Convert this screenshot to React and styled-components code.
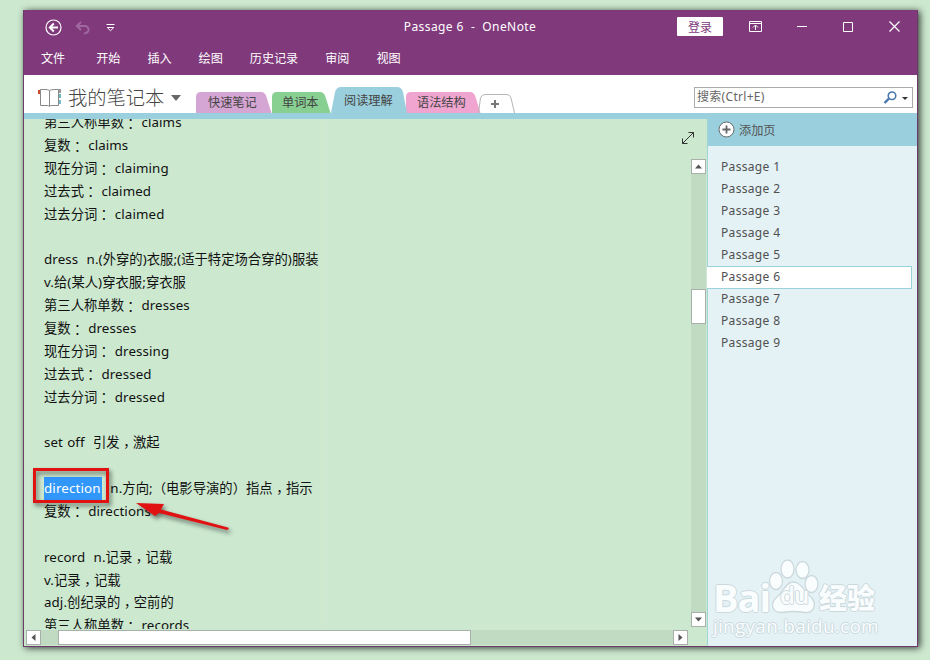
import React from 'react';
import styled, { createGlobalStyle, css } from 'styled-components';

const GlobalStyle = createGlobalStyle`
  * {
    box-sizing: border-box;
  }
  body {
    margin: 0;
    background: #cce8cf;
    font-family: "Noto Sans", "Noto Sans CJK SC", sans-serif;
    overflow: hidden;
  }
  svg {
    display: block;
    flex: none;
  }
`;

const Desktop = styled.div`
  width: 930px;
  height: 660px;
  padding: 10px 12px 13px 23px;
`;

const Window = styled.div`
  position: relative;
  display: flex;
  flex-direction: column;
  width: 895px;
  height: 637px;
  border: 1px solid #6b3a6b;
  border-top: 0;
  background: #fff;
  box-shadow: 2px 1px 7px rgba(0, 0, 0, 0.75);
`;

const TitleBar = styled.header`
  flex: none;
  height: 65px;
  background: #80397b;
  color: #fff;
`;

const TitleRow = styled.div`
  display: grid;
  grid-template-columns: 1fr auto 1fr;
  align-items: center;
  height: 33px;
`;

const QuickAccess = styled.div`
  display: flex;
  align-items: center;
  gap: 13px;
  padding: 2px 0 0 21px;

  svg:last-child {
    margin-left: 3px;
  }
`;

const Title = styled.div`
  margin-left: -1px;
  font-size: 12px;
  line-height: 16px;
  white-space: pre;
  letter-spacing: 0.42px;
`;

const WindowButtons = styled.div`
  display: flex;
  align-items: center;
  justify-content: flex-end;
  padding-right: 17px;
`;

const SignIn = styled.button`
  width: 46px;
  height: 19px;
  margin-right: 26px;
  padding: 0;
  border: 0;
  border-radius: 1px;
  background: #fff;
  color: #80397b;
  font: 12px/17px "Noto Sans CJK SC", sans-serif;
`;

const Menu = styled.nav`
  display: flex;
  gap: 27px;
  padding: 7px 0 0 17px;
  font-size: 12.1px;
  line-height: 18px;

  span:first-child {
    margin-right: 4px;
  }
`;

const NotebookBar = styled.div`
  display: flex;
  flex: none;
  height: 38px;
`;

const Notebook = styled.div`
  display: flex;
  align-items: center;
  width: 172px;
  padding: 7px 0 0 14px;
  color: #444;
  font-size: 19.3px;
  font-weight: 300;
  line-height: 28px;
`;

const NotebookName = styled.span`
  width: 96px;
  margin: 0 7px 0 6px;
  white-space: nowrap;
`;

const Tabs = styled.div`
  display: flex;
  align-items: flex-end;
  flex: 1;
`;

const Tab = styled.div`
  position: relative;
  width: ${p => p.$width}px;
  height: ${p => p.$height}px;
  margin-right: ${p => p.$gap || 0}px;
  z-index: ${p => (p.$active ? 1 : 0)};
`;

const TabShape = styled.svg`
  position: absolute;
  left: 0;
  top: 0;
`;

const TabLabel = styled.span`
  position: relative;
  display: block;
  padding-left: ${p => p.$indent}px;
  color: #444;
  font-size: 12.2px;
  line-height: ${p => p.$line}px;
  white-space: nowrap;
`;

const Search = styled.div`
  display: flex;
  align-items: center;
  width: 219px;
  height: 21px;
  margin: 12px 4px 0 0;
  padding: 0 3px 0 2px;
  border: 1px solid #ababab;
  color: #666;
  font-size: 12px;
  line-height: 17px;

  span {
    flex: 1;
    margin-top: -2px;
    letter-spacing: 0.3px;
  }
`;

const Main = styled.div`
  display: flex;
  flex: 1;
  min-height: 0;
`;

const Editor = styled.main`
  display: flex;
  flex-direction: column;
  width: 684px;
  border-top: 6px solid #9acfdd;
  border-right: 1px solid #9ed6d8;
  background: #cce8cf;
`;

const EditorBody = styled.div`
  display: flex;
  height: 510px;
  overflow: hidden;
`;

const Page = styled.div`
  position: relative;
  flex: 1;
  height: 510px;
  padding: 0 0 0 4px;
  overflow: hidden;
`;

const Note = styled.div`
  width: 299px;
  margin-top: -7.7px;
  padding-left: 15px;
  border: solid #d2e7d8;
  border-width: 0 1px;
`;

const Line = styled.p`
  height: 22.86px;
  margin: 0;
  color: #111;
  font-size: 13.33px;
  line-height: 22.86px;
  white-space: pre;
`;

const Latin = styled.span`
  letter-spacing: 0.1px;
  word-spacing: 0.6px;
`;

const Punct = styled.span`
  position: relative;
  top: ${p => p.$drop}px;
  font-family: "Noto Sans CJK TC", sans-serif;
`;

const Selected = styled.mark`
  display: inline-block;
  width: 58px;
  background: #3297fb;
  color: #fff;
  letter-spacing: 0.15px;
`;

const SideTools = styled.div`
  display: flex;
  flex-direction: column;
  align-items: flex-end;
  width: 30px;
  padding: 12px 1px 0 0;
`;

const ExpandIcon = styled.svg`
  margin-right: 11px;
`;

const VTrack = styled.div`
  display: flex;
  flex-direction: column;
  width: 15px;
  height: 468px;
  margin-top: 14px;
  background: #c1dbc3;
`;

const HTrack = styled.div`
  display: flex;
  justify-content: space-between;
  width: 662px;
  height: 15px;
  margin: 1px 0 0 2px;
  background: #c1dbc3;
`;

const scrollPart = css`
  border: 1px solid #a9afaa;
  background: #fff;
`;

const ScrollButton = styled.button`
  ${scrollPart}
  display: flex;
  align-items: center;
  justify-content: center;
  width: 15px;
  height: 15px;
  padding: 0;
`;

const VThumb = styled.div`
  ${scrollPart}
  width: 15px;
  height: 35px;
  margin: 115px 0 auto;
`;

const HThumb = styled.div`
  ${scrollPart}
  width: 413px;
  margin-right: 185px;
`;

const Sidebar = styled.aside`
  flex: 1;
  background: #e4f2f6;
`;

const AddPage = styled.div`
  display: flex;
  align-items: center;
  gap: 4px;
  height: 33px;
  padding-left: 10px;
  background: #9acfdd;
  color: #555;
  font-size: 12.2px;
`;

const PageList = styled.div`
  padding-top: 9px;
`;

const PageItem = styled.div`
  position: relative;
  height: 22px;
  padding-left: 13px;
  color: #505050;
  font-size: 12px;
  line-height: 24px;
  letter-spacing: 0.33px;

  ${p => p.$active && css`
    width: 205px;
    height: 23px;
    margin: 1px 0 -2px -1px;
    padding-left: 14px;
    border: 1px solid #9ad2da;
    border-left: 0;
    background: #fff;
    line-height: 20px;
  `}
`;

const Highlight = styled.svg`
  position: absolute;
  left: 4px;
  top: 452px;
  pointer-events: none;
`;

const Watermark = styled.div`
  position: absolute;
  left: 688px;
  top: 548px;
  width: 172px;
  height: 82px;
`;

const Paw = styled.svg`
  position: absolute;
`;

const WatermarkText = styled.span`
  position: absolute;
  left: ${p => p.$x}px;
  top: ${p => p.$y}px;
  color: #fafdfe;
  font-family: ${p => p.$font || '"Open Sans"'}, "Noto Sans CJK SC", sans-serif;
  font-size: ${p => p.$size}px;
  font-weight: ${p => p.$weight || 400};
  line-height: 1;
  letter-spacing: ${p => p.$spacing || 0}px;
  white-space: nowrap;
  text-shadow: 1px 0 #cbd9dd, -1px 0 #cbd9dd, 0 1px #cbd9dd, 0 -1px #cbd9dd;
`;

const menus = ['文件', '开始', '插入', '绘图', '历史记录', '审阅', '视图'];

const sections = [
  { name: '快速笔记', color: '#d5a5d3', width: 76, height: 21, indent: 12 },
  { name: '单词本', color: '#87d092', width: 59, height: 21, indent: 10 },
  { name: '阅读理解', color: '#9acfdd', width: 76, height: 26, indent: 13, gap: -1, active: true },
  { name: '语法结构', color: '#efa5cf', width: 75, height: 21, indent: 11, gap: -3 },
];

const lines = [
  '第三人称单数： claims',
  '复数： claims',
  '现在分词： claiming',
  '过去式： claimed',
  '过去分词： claimed',
  '',
  'dress  n.(外穿的)衣服;(适于特定场合穿的)服装',
  'v.给(某人)穿衣服;穿衣服',
  '第三人称单数： dresses',
  '复数： dresses',
  '现在分词： dressing',
  '过去式： dressed',
  '过去分词： dressed',
  '',
  'set off  引发，激起',
  '',
  '[direction]  n.方向;（电影导演的）指点，指示',
  '复数： directions',
  '',
  'record  n.记录，记载',
  'v.记录，记载',
  'adj.创纪录的，空前的',
  '第三人称单数： records',
];

const pages = [1, 2, 3, 4, 5, 6, 7, 8, 9];

// how far each full-width mark drops towards the baseline
const drops = { '：': 1.5, '，': 4 };

// [word] is the selected one, full-width marks are centred in their cell
const renderLine = text =>
  text.split(/(\[\w+\]|[：，]|[ -Z^-~]+)/).map((part, i) => {
    if (/^\[/.test(part)) return <Selected key={i}>{part.slice(1, -1)}</Selected>;
    if (drops[part]) return <Punct key={i} $drop={drops[part]}>{part}</Punct>;
    if (/^[ -~]+$/.test(part)) return <Latin key={i}>{part}</Latin>;
    return part;
  });

const tabPath = (w, h) =>
  `M0 ${h}V5Q0 0 5 0H${w - 11}Q${w - 7} 0 ${w - 5.5} 5L${w - 0.5} ${h}Z`;

const activePath = (w, h) =>
  `M0 ${h}L4 5Q5.5 0 10 0H${w - 10}Q${w - 5.5} 0 ${w - 4} 5L${w} ${h}Z`;

const arrows = {
  up: 'M0 5.5L3.5 1.5L7 5.5Z',
  down: 'M0 1.5H7L3.5 5.5Z',
  left: 'M5.5 0V7L1.5 3.5Z',
  right: 'M1.5 0V7L5.5 3.5Z',
};

const Arrow = ({ dir }) => (
  <svg width="7" height="7" viewBox="0 0 7 7">
    <path d={arrows[dir]} fill="#555" />
  </svg>
);

const BackIcon = () => (
  <svg width="17" height="17" viewBox="0 0 17 17" fill="none" stroke="#fff">
    <circle cx="8.5" cy="8.5" r="7.5" strokeWidth="1.2" />
    <path d="M13 8.5H5M8.8 4.5L4.8 8.5L8.8 12.5" strokeWidth="1.9" />
  </svg>
);

const UndoIcon = () => (
  <svg width="15" height="14" viewBox="0 0 15 14" fill="none" stroke="#a068a0" strokeWidth="2">
    <path d="M6 1L1.8 5L6 9M2 5H9.5C15 5 15 12 9 12.5" />
  </svg>
);

const CustomizeIcon = () => (
  <svg width="9" height="8" viewBox="0 0 9 8" fill="none" stroke="#fff">
    <path d="M0.5 0.5H8.5M1.2 3.5H7.8L4.5 6.7Z" />
  </svg>
);

const NotebookIcon = () => (
  <svg width="24" height="20" viewBox="0 0 24 20" fill="none">
    <path d="M11.500 2.500Q10 1.500 7 1.500H2.500V17.500H9Q11 17.500 11.500 18.500Q12 17.500 14 17.500H20.500V1.500H16Q13 1.500 11.500 2.500V18" stroke="#888" />
    <path d="M1 2V6" stroke="#cf4b27" strokeWidth="2" />
    <path d="M22 1V5" stroke="#777" strokeWidth="1.5" />
    <path d="M22 6V10" stroke="#3a9ca8" strokeWidth="1.5" />
    <path d="M22 12V16" stroke="#4aa5ba" strokeWidth="1.5" />
  </svg>
);

const WindowIcons = () => (
  <svg width="151" height="13" viewBox="0 0 151 13" fill="none" stroke="#fff">
    <path d="M0.5 1.5H12.5V11.5H0.5ZM0.5 3.5H12.5M6.5 10V5.5M4 7.5L6.5 5L9 7.5" />
    <path d="M48 6.5H58" />
    <path d="M94.5 2.5H103.5V11.5H94.5Z" />
    <path d="M140.5 1.5L150.5 11.5M150.5 1.5L140.5 11.5" strokeWidth="1.2" />
  </svg>
);

const App = () => (
  <>
    <GlobalStyle />
    <Desktop>
      <Window>
        <TitleBar>
          <TitleRow>
            <QuickAccess>
              <BackIcon />
              <UndoIcon />
              <CustomizeIcon />
            </QuickAccess>
            <Title>Passage 6  -  OneNote</Title>
            <WindowButtons>
              <SignIn>登录</SignIn>
              <WindowIcons />
            </WindowButtons>
          </TitleRow>
          <Menu>
            {menus.map(name => <span key={name}>{name}</span>)}
          </Menu>
        </TitleBar>

        <NotebookBar>
          <Notebook>
            <NotebookIcon />
            <NotebookName>我的笔记本</NotebookName>
            <svg width="11" height="6" viewBox="0 0 11 6"><path d="M0 0H10L5 6Z" fill="#666" /></svg>
          </Notebook>
          <Tabs>
            {sections.map(s => (
              <Tab key={s.name} $width={s.width} $height={s.height} $gap={s.gap} $active={s.active}>
                <TabShape width={s.width} height={s.height}>
                  <path d={(s.active ? activePath : tabPath)(s.width, s.height)} fill={s.color} />
                </TabShape>
                <TabLabel $indent={s.indent} $line={s.active ? 27 : 21}>{s.name}</TabLabel>
              </Tab>
            ))}
            <Tab $width={38} $height={19}>
              <TabShape width="38" height="19" fill="none">
                <path d="M0.5 19L2.5 4Q3.5 0.5 7 0.5H29Q32 0.5 33 4L36.5 19" stroke="#b5b5b5" />
                <path d="M13 10H21M17 6V14" stroke="#777" strokeWidth="2" />
              </TabShape>
            </Tab>
          </Tabs>
          <Search>
            <span>搜索(Ctrl+E)</span>
            <svg width="14" height="13" viewBox="0 0 14 13" fill="none" stroke="#4677ad">
              <circle cx="9" cy="4.8" r="3.8" strokeWidth="1.5" />
              <path d="M6 7.5L1.5 12" strokeWidth="2.4" />
            </svg>
            <svg width="12" height="6" viewBox="0 0 12 6"><path d="M5 2H11L8 5Z" fill="#333" /></svg>
          </Search>
        </NotebookBar>

        <Main>
          <Editor>
            <EditorBody>
              <Page>
                <Note>
                  {lines.map((text, i) => <Line key={i}>{renderLine(text)}</Line>)}
                </Note>
              </Page>
              <SideTools>
                <ExpandIcon width="14" height="14" viewBox="0 0 14 14" fill="none" stroke="#333">
                  <path d="M1.5 12.5L12.5 1.5M7.5 1.5H12.5V6.5M1.5 7.5V12.5H6.5" />
                </ExpandIcon>
                <VTrack>
                  <ScrollButton><Arrow dir="up" /></ScrollButton>
                  <VThumb />
                  <ScrollButton><Arrow dir="down" /></ScrollButton>
                </VTrack>
              </SideTools>
            </EditorBody>
            <HTrack>
              <ScrollButton><Arrow dir="left" /></ScrollButton>
              <HThumb />
              <ScrollButton><Arrow dir="right" /></ScrollButton>
            </HTrack>
          </Editor>

          <Sidebar>
            <AddPage>
              <svg width="17" height="17" viewBox="0 0 17 17" fill="none" stroke="#666">
                <circle cx="8.5" cy="8.5" r="7.5" fill="#fff" />
                <path d="M4.5 8.5H12.5M8.5 4.5V12.5" strokeWidth="1.8" />
              </svg>
              添加页
            </AddPage>
            <PageList>
              {pages.map(n => (
                <PageItem key={n} $active={n === 6}>Passage {n}</PageItem>
              ))}
            </PageList>
          </Sidebar>
        </Main>

        <Highlight width="210" height="80" viewBox="28 462 210 80">
          <g style={{ filter: 'drop-shadow(2px 3px 2px rgba(0,0,0,.5))' }}>
            <path d="M34.5 469.5H107.500V501.5H34.5Z" fill="none" stroke="#e01212" strokeWidth="3" />
            <path d="M136 503L164 504L161 509.500L228 527.500Q230 529 227 530L159 513L155 516Z" fill="#e01212" />
          </g>
        </Highlight>

        <Watermark>
          <WatermarkText $x={1} $y={20} $size={38} $weight={700} $spacing={-1}>Bai</WatermarkText>
          <Paw width="172" height="60" viewBox="0 0 172 60" fill="#fafdfe" stroke="#cbd9dd" strokeWidth="1.3">
            <ellipse cx="64" cy="23" rx="6.5" ry="8.5" />
            <ellipse cx="75.5" cy="11" rx="6.5" ry="9" />
            <ellipse cx="90.5" cy="12" rx="6.5" ry="8.5" />
            <ellipse cx="99.5" cy="26" rx="6.5" ry="8.5" />
            <path d="M81 24C89 24 92 33 98 38C106 46 102 55 93 54.500Q81 52.500 70 54.500C59 55 58 45 65 39C71 34 74 24 81 24Z" />
          </Paw>
          <WatermarkText $x={68} $y={25} $size={24} $weight={600} $spacing={-1}>du</WatermarkText>
          <WatermarkText $x={107} $y={25} $size={28} $weight={900} $font={'"Noto Sans CJK SC"'}>经验</WatermarkText>
          <WatermarkText $x={1} $y={59} $size={19} $spacing={0.25}>jingyan.baidu.com</WatermarkText>
        </Watermark>
      </Window>
    </Desktop>
  </>
);

export default App;
